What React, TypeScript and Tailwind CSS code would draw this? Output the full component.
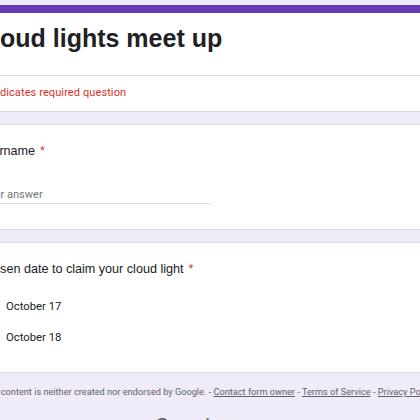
const roboto = { fontFamily: 'Roboto, "Liberation Sans", sans-serif' };

function Card({ children, className = '' }: { children: React.ReactNode; className?: string }) {
  return (
    <div className={`overflow-hidden rounded-lg border border-[#dadce0] bg-white ${className}`}>
      {children}
    </div>
  );
}

function Required() {
  return <span className="ml-[5px] text-[#d93025]">*</span>;
}

const options = ['October 17', 'October 18'];

export default function App() {
  return (
    <div className="h-[420px] w-[420px] overflow-hidden bg-[#f0ebf8]">
      <div className="ml-[-48px] flex w-[560px] flex-col gap-[12px] pt-[5px]">
        {/* header card */}
        <div className="overflow-hidden rounded-lg border-b border-[#dadce0] bg-white">
          <div className="h-[8px] bg-[#673ab7]" />
          <div className="pb-[22px] pl-[23px] pt-[10px] font-['Liberation_Sans',Arial,sans-serif] text-[25px] font-bold leading-[30px] text-[#202124]">
            Cloud lights meet up
          </div>
          <div className="border-t border-[#dadce0] pb-[10px] pl-[31px] pt-[9px] text-[11px] leading-[16px] tracking-[0.1px] text-[#d93025]" style={roboto}>
            * Indicates required question
          </div>
        </div>

        {/* username question */}
        <Card className="pb-[25px] pl-[24px] pt-[16px]">
          <div className="font-['Liberation_Sans',Arial,sans-serif] text-[12.6px] leading-[20px] text-[#202124]">
            Username
            <Required />
          </div>
          <div className="mt-[26px] w-[234px] border-b border-[#dadce0]">
            <div className="pl-[5px] text-[11px] leading-[16px] text-[#70757a]" style={roboto}>
              Your answer
            </div>
          </div>
        </Card>

        {/* date question */}
        <Card className="pb-[26px] pl-[24px] pt-[16px]">
          <div className="font-['Liberation_Sans',Arial,sans-serif] text-[12.6px] leading-[20px] text-[#202124]">
            Chosen date to claim your cloud light
            <Required />
          </div>
          <div className="mt-[20px] flex flex-col gap-[15px]">
            {options.map((o) => (
              <div key={o} className="flex items-center gap-[13px]">
                <span className="h-[16px] w-[16px] shrink-0 rounded-full border-2 border-[#5f6368]" />
                <span className="text-[11.3px] leading-[16px] text-[#202124]" style={roboto}>
                  {o}
                </span>
              </div>
            ))}
          </div>
        </Card>

        {/* footer */}
        <div className="flex flex-col gap-[13px] pl-[29px]" style={roboto}>
          <div className="whitespace-nowrap text-[9.2px] leading-[14px] text-[#5f6368]">
            This content is neither created nor endorsed by Google. -{' '}
            <span className="underline">Contact form owner</span> -{' '}
            <span className="underline">Terms of Service</span> -{' '}
            <span className="underline">Privacy Policy</span>
          </div>
          <div className="ml-[174px] flex items-baseline gap-[5px] whitespace-nowrap leading-[28px] text-[#5f6368]">
            <span className="text-[21px]">Google</span>
            <span className="text-[18px]">Forms</span>
          </div>
        </div>
      </div>
    </div>
  );
}
